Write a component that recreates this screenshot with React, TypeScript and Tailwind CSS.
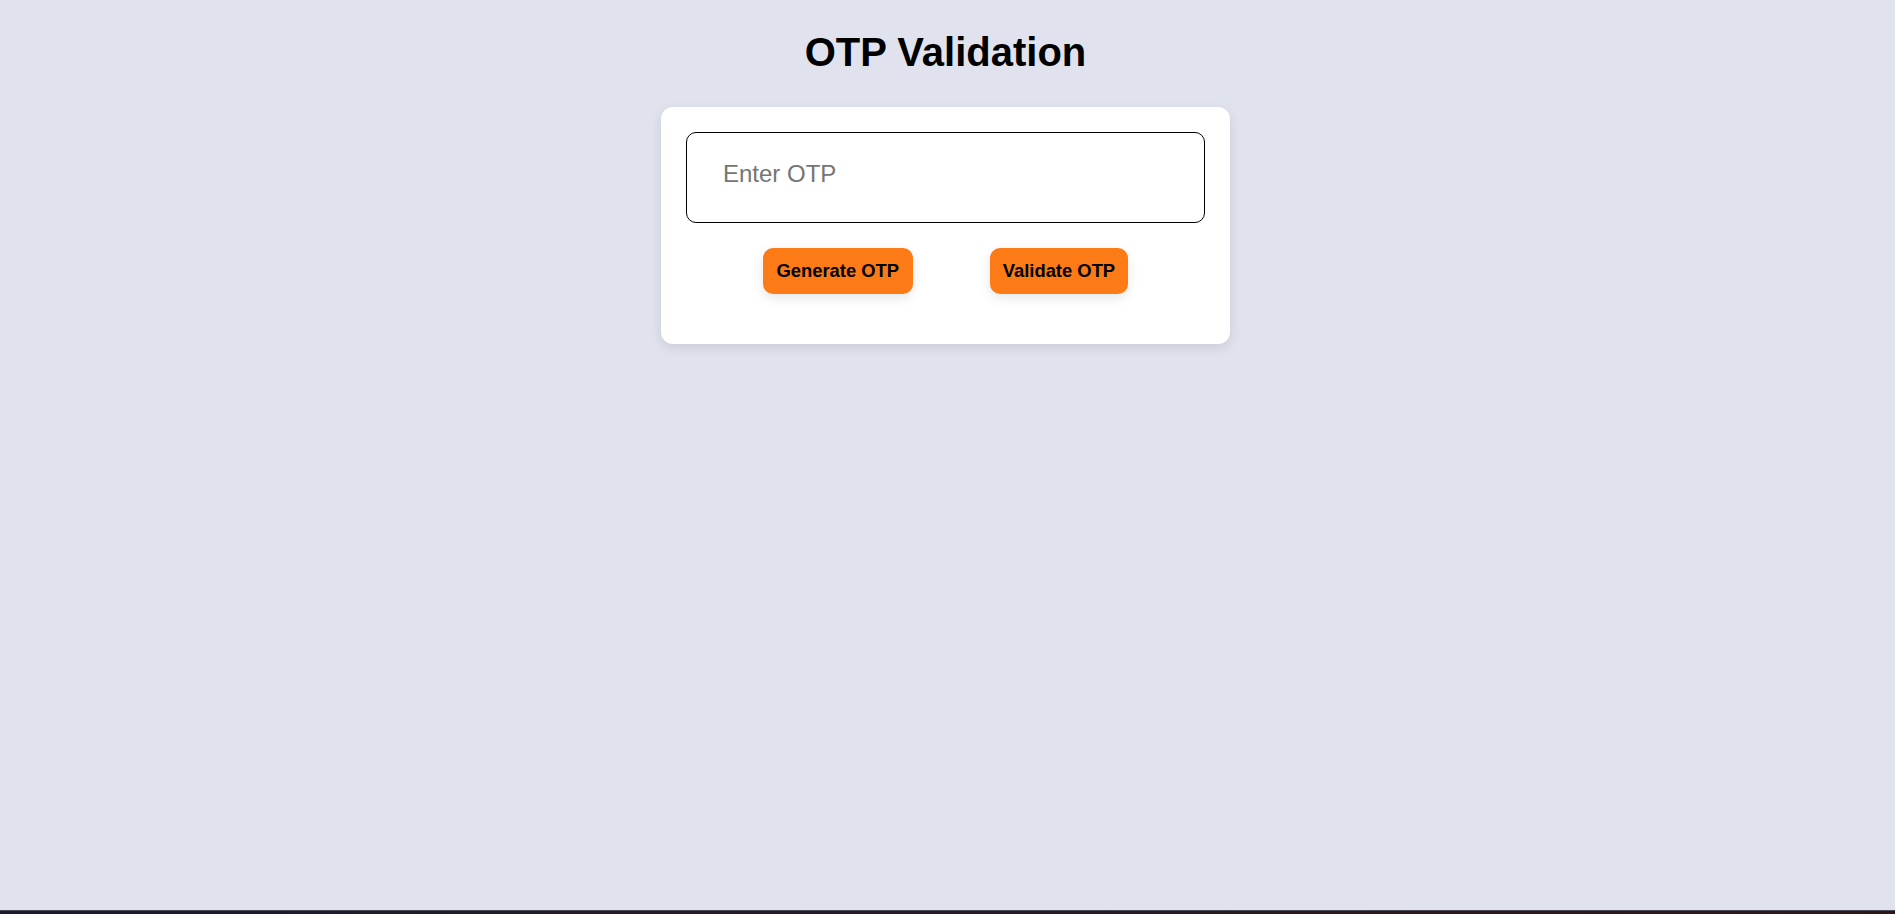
import React, { useState } from "react";

export default function App() {
  const [otp, setOtp] = useState("");

  return (
    <div className="min-h-screen flex flex-col bg-[#e0e3ed] font-['Liberation_Sans',Arial,sans-serif] text-black">
      <main className="flex-1 flex flex-col items-center pt-[29px] pr-[4px]">
        <h1 className="text-[40px] leading-[46px] font-bold">OTP Validation</h1>

        <div className="mt-[32px] w-[569px] bg-white rounded-xl px-[25px] pt-[25px] pb-[50px] shadow-[0_4px_12px_rgba(0,0,0,0.1)]">
          <input
            type="text"
            value={otp}
            onChange={(e) => setOtp(e.target.value)}
            placeholder="Enter OTP"
            className="block w-full border border-black rounded-[10px] pl-[36px] pr-4 pt-[27px] pb-[34px] text-[24px] leading-[28px] outline-none placeholder:text-[#757575]"
          />

          <div className="flex justify-center gap-[77px] mt-[25px]">
            <button className="h-[46px] px-[13.6px] rounded-[10px] bg-[#fc7b17] text-[18.4px] font-bold shadow-[0_4px_12px_rgba(0,0,0,0.1)]">
              Generate OTP
            </button>
            <button className="h-[46px] px-[13px] rounded-[10px] bg-[#fc7b17] text-[18.4px] font-bold shadow-[0_4px_12px_rgba(0,0,0,0.1)]">
              Validate OTP
            </button>
          </div>
        </div>
      </main>
      <div className="h-[4px] border-t border-[#4a4a56] bg-gradient-to-r from-[#1c1a2b] via-[#261a26] to-[#2e1616]" />
    </div>
  );
}
